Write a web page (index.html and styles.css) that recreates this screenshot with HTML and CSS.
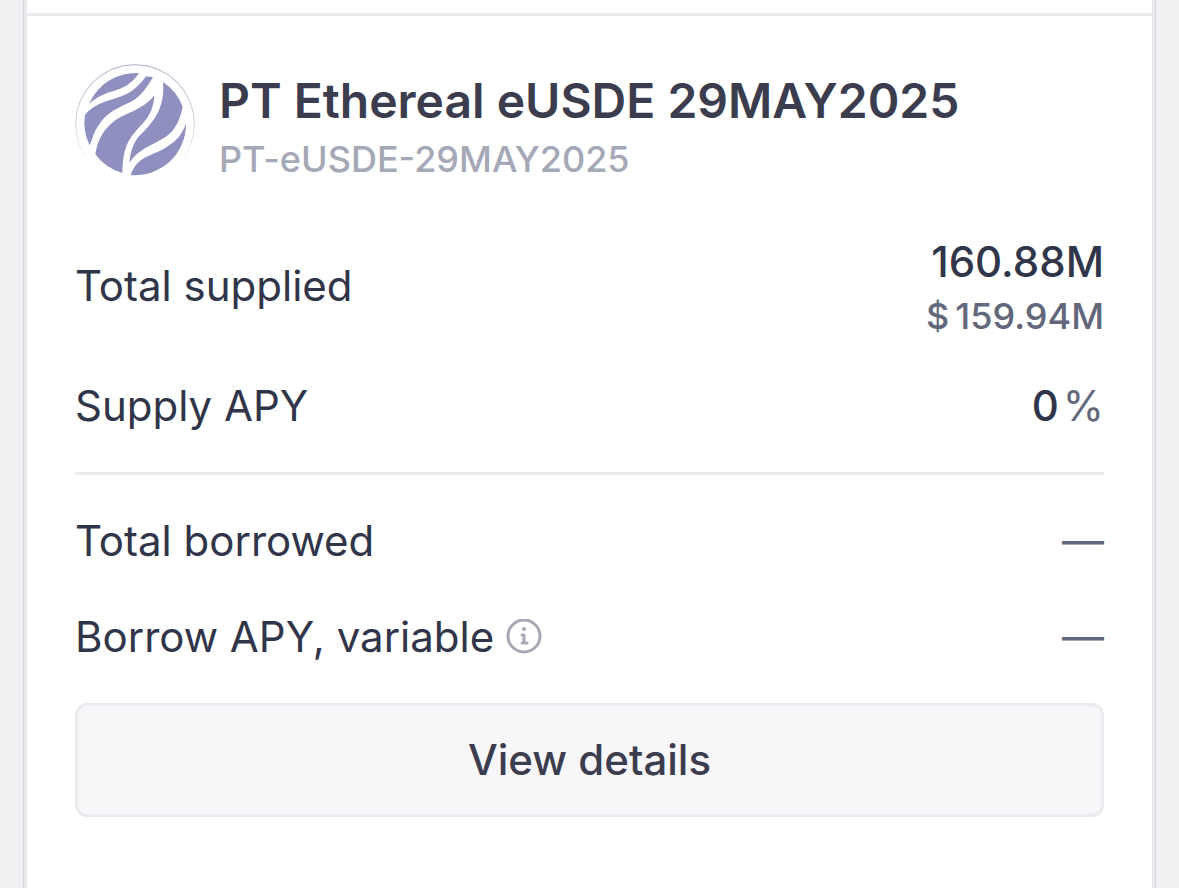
FILE: index.html
```html
<!DOCTYPE html>
<html lang="en">
<head>
  <meta charset="UTF-8">
  <meta name="viewport" content="width=device-width, initial-scale=1.0">
  <title>Markets</title>
  <link rel="stylesheet" href="styles.css">
</head>
<body>
  <main class="market-list">
    <article class="market">
      <header class="asset">
        <svg class="asset-icon" viewBox="30 27 360 360" aria-hidden="true">
          <defs>
            <linearGradient id="ring" x1="0" y1="0" x2="0" y2="1">
              <stop offset="0" stop-color="#a9a9c4"/>
              <stop offset="0.6" stop-color="#dcdce8"/>
              <stop offset="0.85" stop-color="#fff"/>
            </linearGradient>
          </defs>
          <circle cx="210" cy="207" r="178" fill="#fff" stroke="url(#ring)" stroke-width="3"/>
          <g fill="#8f90bf">
            <path d="M72 147A153 153 0 0 1 222 54C188 104 155 102 120 117Q92 128 72 147Z"/>
            <path d="M60 179C100 134 150 138 194 112C220 95 231 80 243 64L264 67C250 90 229 125 197 141C160 158 130 171 108 200C88 226 84 245 74 271A153 153 0 0 1 60 179Z"/>
            <path d="M91 298C98 253 118 219 152 195C192 169 232 166 268 121C265 170 247 192 218 222C181 262 174 294 172 354A153 153 0 0 1 91 298Z"/>
            <path d="M294 81A153 153 0 0 1 353 155C346 190 333 225 300 247C262 271 220 282 193 323C198 279 208 256 234 232C274 191 300 150 294 81Z"/>
            <path d="M363 205A153 153 0 0 1 197 360C206 334 221 315 250 303C305 280 345 260 363 205Z"/>
          </g>
        </svg>
        <div>
          <h2 class="asset-name">PT Ethereal eUSDE 29MAY2025</h2>
          <p class="asset-symbol">PT-eUSDE-29MAY2025</p>
        </div>
      </header>

      <dl class="stats">
        <div class="stat stat-tall">
          <dt>Total supplied</dt>
          <dd>
            <span class="amount">160.88M</span>
            <span class="usd"><span>$</span><span>159.94M</span></span>
          </dd>
        </div>
        <div class="stat">
          <dt>Supply APY</dt>
          <dd class="percent"><span class="amount">0</span><span class="unit">%</span></dd>
        </div>
      </dl>

      <hr class="divider">

      <dl class="stats">
        <div class="stat">
          <dt>Total borrowed</dt>
          <dd class="empty">—</dd>
        </div>
        <div class="stat">
          <dt>
            Borrow APY, variable
            <button class="info" type="button" aria-label="About the variable borrow APY">
              <svg viewBox="0 0 36 36" aria-hidden="true">
                <circle cx="18" cy="17" r="16" fill="none" stroke="#a5a8b6" stroke-width="3"/>
                <circle cx="18" cy="10" r="2" fill="#a5a8b6"/>
                <path d="M16 16H18V24M16 24H21" fill="none" stroke="#a5a8b6" stroke-width="3" stroke-linecap="round" stroke-linejoin="round"/>
              </svg>
            </button>
          </dt>
          <dd class="empty">—</dd>
        </div>
      </dl>

      <button class="details" type="button">View details</button>
    </article>
  </main>
</body>
</html>
```
FILE: styles.css
```css
* {
  box-sizing: border-box;
}
body {
  margin: 0;
  background: #f0f0f3;
  color: #303549;
  font-family: Inter, "Liberation Sans", sans-serif;
  font-size: 42px;
  line-height: 60px;
}
h2, p, dl, dd {
  margin: 0;
}
.market-list {
  min-height: 100vh;
  margin: 0 24px;
  background: #fff;
  border: solid #e9e9ed;
  border-width: 0 3px;
  box-shadow: 0 0 0 1px #d5d5dc;
  padding-top: 13px;
}
.market {
  border-top: 3px solid #eaebef;
  padding: 48px;
}
.asset {
  display: flex;
  align-items: flex-end;
  gap: 24px;
  margin-bottom: 48px;
}
.asset-icon {
  width: 120px;
  height: 120px;
  flex: none;
}
.asset-name {
  color: #3b3d4f;
  font-size: 48px;
  font-weight: 600;
  line-height: 66px;
}
.asset-symbol {
  color: #a5a8b6;
  font-size: 36px;
  font-weight: 500;
  line-height: 50px;
}
.stat {
  display: flex;
  align-items: center;
  justify-content: space-between;
  min-height: 60px;
  margin-bottom: 36px;
}
.stat-tall {
  min-height: 108px;
}
.stat dt {
  display: flex;
  align-items: center;
  gap: 12px;
}
.amount {
  display: block;
  font-weight: 500;
  text-align: right;
}
.usd {
  display: flex;
  gap: 6px;
  color: #62677b;
  font-size: 36px;
  font-weight: 500;
  line-height: 48px;
}
.percent {
  display: flex;
  gap: 4px;
}
.unit,
.empty {
  color: #62677b;
}
.divider {
  height: 3px;
  margin: 0 0 36px;
  border: 0;
  background: #eaebef;
}
.info {
  width: 36px;
  height: 36px;
  padding: 0;
  border: 0;
  background: none;
  cursor: pointer;
}
.info svg {
  display: block;
}
.details {
  display: block;
  width: 100%;
  height: 114px;
  border: 3px solid #eaebef;
  border-radius: 12px;
  background: #f7f7f9;
  color: #3b3d4f;
  font: inherit;
  font-weight: 500;
  cursor: pointer;
}
.details:hover {
  background: #eeeef2;
}
```
